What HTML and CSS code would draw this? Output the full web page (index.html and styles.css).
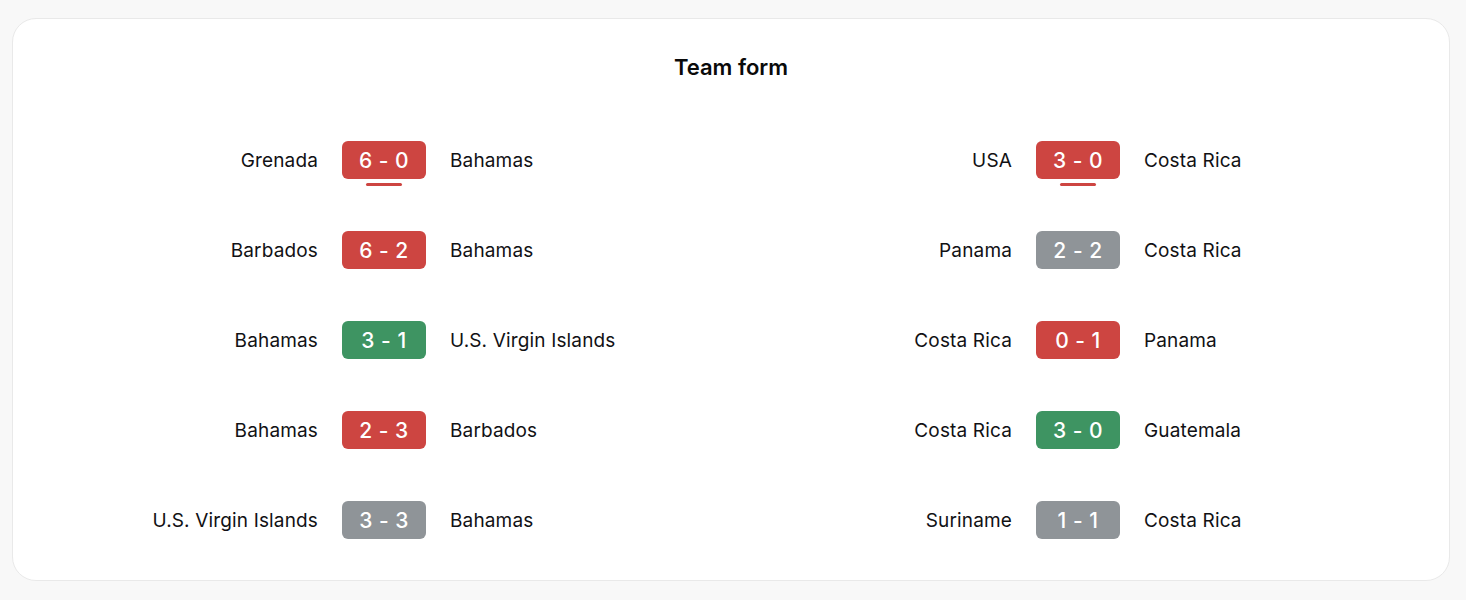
FILE: index.html
```html
<!DOCTYPE html>
<html>
<head>
<meta charset="utf-8">
<link rel="stylesheet" href="styles.css">
</head>
<body>
<div class="card">
  <h2 class="title">Team form</h2>
  <div class="halves">
    <div class="half">
      <div class="match"><span class="home">Grenada</span><span class="score loss current">6 - 0</span><span class="away">Bahamas</span></div>
      <div class="match"><span class="home">Barbados</span><span class="score loss">6 - 2</span><span class="away">Bahamas</span></div>
      <div class="match"><span class="home">Bahamas</span><span class="score win">3 - 1</span><span class="away">U.S. Virgin Islands</span></div>
      <div class="match"><span class="home">Bahamas</span><span class="score loss">2 - 3</span><span class="away">Barbados</span></div>
      <div class="match"><span class="home">U.S. Virgin Islands</span><span class="score draw">3 - 3</span><span class="away">Bahamas</span></div>
    </div>
    <div class="half">
      <div class="match"><span class="home">USA</span><span class="score loss current">3 - 0</span><span class="away">Costa Rica</span></div>
      <div class="match"><span class="home">Panama</span><span class="score draw">2 - 2</span><span class="away">Costa Rica</span></div>
      <div class="match"><span class="home">Costa Rica</span><span class="score loss">0 - 1</span><span class="away">Panama</span></div>
      <div class="match"><span class="home">Costa Rica</span><span class="score win">3 - 0</span><span class="away">Guatemala</span></div>
      <div class="match"><span class="home">Suriname</span><span class="score draw">1 - 1</span><span class="away">Costa Rica</span></div>
    </div>
  </div>
</div>
</body>
</html>
```
FILE: styles.css
```css
html, body {
  margin: 0;
  padding: 0;
  background: #f8f8f8;
}
body {
  padding: 18px 16px 0 12px;
  font-family: Inter, "Noto Sans", sans-serif;
  color: #111114;
}
.card {
  background: #ffffff;
  border: 1px solid #e9e9e9;
  border-radius: 24px;
  padding: 35px 24px 41px;
  box-sizing: border-box;
  height: 563px;
}
.title {
  margin: 0;
  text-align: center;
  font-size: 22px;
  line-height: 26px;
  font-weight: 600;
  color: #0a0a0a;
}
.halves {
  margin-top: 61px;
  display: grid;
  grid-template-columns: 1fr 1fr;
}
.half {
  display: flex;
  flex-direction: column;
  gap: 52px;
}
.match {
  display: grid;
  grid-template-columns: 1fr 84px 1fr;
  column-gap: 24px;
  align-items: center;
  height: 38px;
  font-size: 19px;
  letter-spacing: 0.15px;
}
.home {
  text-align: right;
  white-space: nowrap;
}
.away {
  text-align: left;
  white-space: nowrap;
}
.score {
  position: relative;
  height: 38px;
  border-radius: 6px;
  color: #fff;
  font-size: 21px;
  font-weight: 500;
  display: flex;
  align-items: center;
  justify-content: center;
  letter-spacing: 0.5px;
}
.loss { background: #cd4541; }
.win { background: #3e9462; }
.draw { background: #8f9498; }
.current::after {
  content: "";
  position: absolute;
  left: 24px;
  right: 24px;
  bottom: -7px;
  height: 3px;
  border-radius: 2px;
  background: #cd4541;
}
```
